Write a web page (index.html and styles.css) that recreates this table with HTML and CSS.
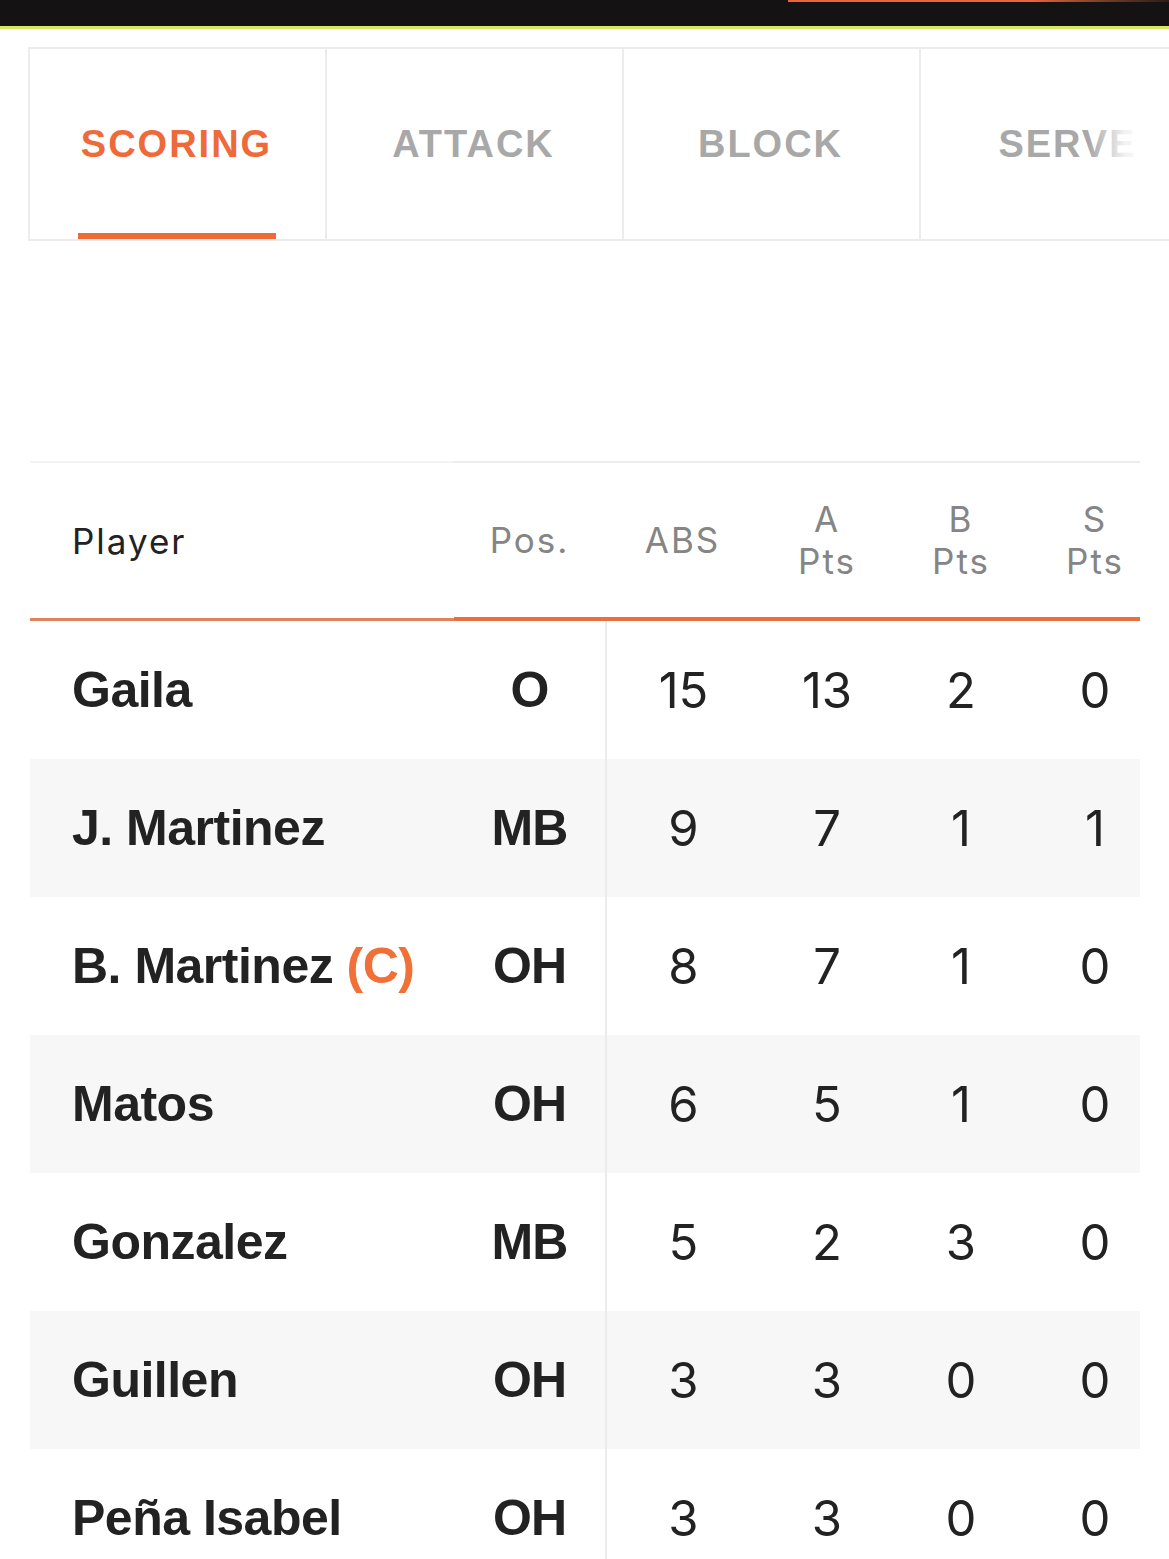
FILE: index.html
```html
<!DOCTYPE html>
<html lang="en">
<head>
<meta charset="utf-8">
<title>Scoring</title>
<link rel="stylesheet" href="styles.css">
</head>
<body>
<header class="topbar"><div class="topbar-accent"></div></header>

<nav class="tabs">
  <div class="tab active">SCORING</div>
  <div class="tab">ATTACK</div>
  <div class="tab">BLOCK</div>
  <div class="tab">SERVE</div>
  <div class="tabs-fade"></div>
</nav>

<table class="stats">
  <colgroup>
    <col class="c-player"><col class="c-pos"><col class="c-abs"><col class="c-a"><col class="c-b"><col class="c-s">
  </colgroup>
  <thead>
    <tr>
      <th class="h-player">Player</th>
      <th>Pos.</th>
      <th>ABS</th>
      <th>A<br>Pts</th>
      <th>B<br>Pts</th>
      <th class="h-last">S<br>Pts</th>
    </tr>
  </thead>
  <tbody>
    <tr><td class="name">Gaila</td><td class="pos">O</td><td class="num first">15</td><td class="num">13</td><td class="num">2</td><td class="num last">0</td></tr>
    <tr><td class="name">J. Martinez</td><td class="pos">MB</td><td class="num first">9</td><td class="num">7</td><td class="num">1</td><td class="num last">1</td></tr>
    <tr><td class="name">B. Martinez <span class="captain">(C)</span></td><td class="pos">OH</td><td class="num first">8</td><td class="num">7</td><td class="num">1</td><td class="num last">0</td></tr>
    <tr><td class="name">Matos</td><td class="pos">OH</td><td class="num first">6</td><td class="num">5</td><td class="num">1</td><td class="num last">0</td></tr>
    <tr><td class="name">Gonzalez</td><td class="pos">MB</td><td class="num first">5</td><td class="num">2</td><td class="num">3</td><td class="num last">0</td></tr>
    <tr><td class="name">Guillen</td><td class="pos">OH</td><td class="num first">3</td><td class="num">3</td><td class="num">0</td><td class="num last">0</td></tr>
    <tr><td class="name">Peña Isabel</td><td class="pos">OH</td><td class="num first">3</td><td class="num">3</td><td class="num">0</td><td class="num last">0</td></tr>
  </tbody>
</table>
</body>
</html>
```

FILE: styles.css
```css
html, body {
  margin: 0;
  padding: 0;
  background: #ffffff;
  overflow-x: hidden;
}

body {
  font-family: "Liberation Sans", Arial, sans-serif;
  color: #222222;
}

/* top dark bar */
.topbar {
  height: 26px;
  background: #141213;
  border-bottom: 3px solid #d5e862;
  display: flex;
}

.topbar-accent {
  margin-left: 788px;
  flex: 1;
  height: 2px;
  background: linear-gradient(90deg, #e9643c 0%, #e9643c 64%, #6a3a26 85%, #2a1d18 100%);
}

/* tabs */
.tabs {
  position: relative;
  margin: 18px 0 0 28px;
  display: flex;
  overflow: hidden;
  border-top: 2px solid #ececec;
  border-bottom: 2px solid #ececec;
  border-left: 2px solid #ececec;
  box-sizing: border-box;
}

.tab {
  position: relative;
  flex: 0 0 297px;
  box-sizing: border-box;
  height: 190px;
  border-right: 2px solid #ececec;
  display: flex;
  align-items: center;
  justify-content: center;
  padding-right: 2px;
  font-family: "Liberation Sans", Arial, sans-serif;
  font-weight: 700;
  font-size: 38px;
  letter-spacing: 2px;
  color: #a8a8a8;
}

.tab.active {
  color: #ee6a3a;
}

.tab.active::after {
  content: "";
  position: absolute;
  left: 48px;
  bottom: 0;
  width: 198px;
  height: 6px;
  background: #ee6a3a;
}

.tabs-fade {
  position: absolute;
  top: 0;
  right: 0;
  bottom: 0;
  width: 80px;
  background: linear-gradient(90deg, rgba(255,255,255,0) 0%, rgba(255,255,255,0.85) 45%, #ffffff 75%);
}

/* table */
.stats {
  margin: 220px 0 0 30px;
  width: 1110px;
  border-collapse: separate;
  border-spacing: 0;
  table-layout: fixed;
}

.c-player { width: 424px; }
.c-pos { width: 151px; }
.c-abs { width: 155px; }
.c-a { width: 134px; }
.c-b { width: 134px; }
.c-s { width: 112px; }

.stats th {
  height: 160px;
  padding: 0;
  box-sizing: border-box;
  font-family: Inter, "Liberation Sans", sans-serif;
  font-weight: 400;
  font-size: 35px;
  line-height: 42px;
  letter-spacing: 2px;
  color: #858585;
  text-align: center;
  vertical-align: middle;
  border-top: 2px solid #ececec;
  border-bottom: 4px solid #ea6e3e;
}

.stats th.h-player {
  text-align: left;
  padding-left: 42px;
  color: #222222;
  border-top-color: #f3f3f3;
  border-bottom: 3px solid #e0825a;
}

.stats th.h-last,
.stats td.last {
  padding-left: 22px;
}

.stats tbody tr:nth-child(even) td {
  background: #f7f7f7;
}

.stats td {
  height: 138px;
  padding: 0;
  vertical-align: middle;
  text-align: center;
  box-sizing: border-box;
}

.stats td.name {
  text-align: left;
  padding-left: 42px;
  font-family: "Liberation Sans", Arial, sans-serif;
  font-weight: 700;
  font-size: 50px;
  letter-spacing: -0.5px;
  white-space: nowrap;
}

.captain {
  color: #f07038;
}

.stats td.pos {
  font-family: "Liberation Sans", Arial, sans-serif;
  font-weight: 700;
  font-size: 50px;
  letter-spacing: -1px;
}

.stats td.num {
  font-family: Inter, "Liberation Sans", sans-serif;
  font-weight: 400;
  font-size: 49px;
  color: #222222;
}

.stats td.first {
  border-left: 2px solid #ebebeb;
}
```
